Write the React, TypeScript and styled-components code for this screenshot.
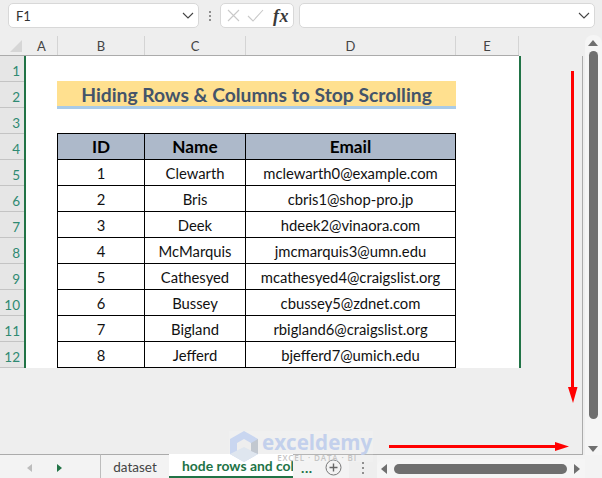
import React from "react";
import styled, { createGlobalStyle } from "styled-components";

const Global = createGlobalStyle`
  html, body { margin: 0; padding: 0; background: #eeeeee; }
  * { box-sizing: border-box; }
`;
const Page = styled.div`
  position: relative; width: 602px; height: 478px; overflow: hidden;
  background: #eeeeee; display: flex; flex-direction: column;
  font-family: Lato, "Liberation Sans", sans-serif; color: #222;
`;
const FormulaBar = styled.div`
  height: 36px; padding: 3px 7px 8px 8px; display: flex; align-items: stretch; flex: none;
`;
const Field = styled.div<{ $w?: number; $grow?: boolean }>`
  ${p => (p.$w ? `width:${p.$w}px;` : "")} ${p => (p.$grow ? "flex:1;" : "")}
  background: #fff; border: 1px solid #d8d8d8; border-radius: 5px;
  display: flex; align-items: center; padding: 0 4px 0 7px; font-size: 13px; color: #333;
`;
const FieldLabel = styled.span` flex: 1; font-family: Lato, sans-serif; font-size: 13px; `;
const Grip = styled.div`
  width: 21px; display: flex; flex-direction: column; align-items: center; justify-content: center; gap: 2px;
`;
const Dot = styled.i<{ $c?: string }>` display: block; width: 2px; height: 2px; background: ${p => p.$c || "#8f8f8f"}; `;
const FxBox = styled(Field)` margin-right: 5px; padding: 0 4px 0 6px; gap: 7px; `;
const Fx = styled.span`
  font-family: "Liberation Serif", serif; font-style: italic; font-weight: 700; font-size: 18px; line-height: 1; color: #3a3a3a; margin-left: 2px; letter-spacing: 0.5px;
`;
const Middle = styled.div` flex: 1; min-height: 0; display: flex; `;
const SheetPane = styled.div`
  width: 583px; flex: none; position: relative; display: flex; flex-direction: column;
`;
const ColHeaders = styled.div`
  height: 20px; flex: none; display: grid; width: 519px;
  grid-template-columns: 26px 32px 87px 101px 210px 63px;
  border-bottom: 1px solid #ababab;
`;
const Corner = styled.div` display: flex; align-items: flex-end; justify-content: flex-end; padding: 0 4px 3px 0; `;
const ColHead = styled.div`
  display: flex; align-items: center; justify-content: center; font-size: 13px; color: #444;
  border-right: 1px solid #d4d4d4;
`;
const SheetWell = styled.div`
  flex: 1; min-height: 0; border-right: 1px solid #ababab; border-bottom: 1px solid #ababab;
`;
const SheetBody = styled.div` display: flex; height: 312px; width: 521px; `;
const RowHeaders = styled.div` width: 24px; flex: none; display: flex; flex-direction: column; background: #e6e6e6; `;
const RowHead = styled.div`
  height: 26px; flex: none; display: flex; align-items: center; justify-content: flex-end; padding: 5px 4px 0 0;
  font-size: 13.5px; color: #2f8a72; border-bottom: 1px solid #c4c4c4;
`;
const Canvas = styled.div`
  flex: 1; background: #fff; border-left: 2px solid #217346; border-right: 2px solid #217346;
  padding: 25px 0 0 31px; display: flex; flex-direction: column;
`;
const Title = styled.div`
  width: 399px; height: 28px; background: #ffe08f; border-bottom: 3px solid #a9cbe8;
  font-weight: 700; font-size: 19.3px; color: #44546a; text-align: center; line-height: 27px; flex: none;
`;
const Table = styled.table`
  margin-top: 24px; border-collapse: collapse; table-layout: fixed; width: 398px; flex: none;
`;
const Th = styled.th<{ $w: number }>`
  width: ${p => p.$w}px; height: 26px; padding: 0; border: 1px solid #000; background: #adb9ca;
  font-size: 17.2px; font-weight: 700; color: #000; text-align: center;
`;
const Td = styled.td`
  height: 26px; padding: 0; border: 1px solid #000; font-size: 14.8px; color: #111; text-align: center; background: #fff;
`;
const VScroll = styled.div`
  flex: 1; display: flex; flex-direction: column; align-items: center;
`;
const VTrack = styled.div`
  margin-top: -1px; width: 17px; height: 420px; background: #f5f5f5; border-radius: 8px 8px 0 0; flex: none;
  display: flex; flex-direction: column; align-items: center; padding: 5px 0 3px; margin-left: 1px;
`;
const VThumb = styled.div` width: 9px; height: 368px; margin-top: 5px; background: #6f6f6f; border-radius: 5px; flex: none; `;
const VSpacer = styled.div` flex: 1; `;
const Tri = styled.i<{ $d: "u" | "d" | "l" | "r"; $c?: string; $s?: number }>`
  display: block; width: 0; height: 0; flex: none;
  ${p => {
    const c = p.$c || "#6f6f6f"; const s = p.$s || 4;
    if (p.$d === "u") return `border-left:${s + 1}px solid transparent;border-right:${s + 1}px solid transparent;border-bottom:${s + 2}px solid ${c};`;
    if (p.$d === "d") return `border-left:${s + 1}px solid transparent;border-right:${s + 1}px solid transparent;border-top:${s + 2}px solid ${c};`;
    if (p.$d === "l") return `border-top:${s + 1}px solid transparent;border-bottom:${s + 1}px solid transparent;border-right:${s + 2}px solid ${c};`;
    return `border-top:${s + 1}px solid transparent;border-bottom:${s + 1}px solid transparent;border-left:${s + 2}px solid ${c};`;
  }}
`;
const TabBar = styled.div` height: 24px; flex: none; display: flex; align-items: stretch; margin-top: -1px; position: relative; `;
const TabNav = styled.div`
  width: 101px; flex: none; background: #f3f3f3; border-top: 1px solid #ababab; border-right: 1px solid #bdbdbd;
  display: flex; align-items: center; padding: 2px 0 0 27px; gap: 25px;
`;
const Tab = styled.div`
  width: 68px; flex: none; background: #f3f3f3; border-top: 1px solid #ababab; display: flex; align-items: center; justify-content: center;
  font-size: 13.5px; color: #444; padding: 1px 0 0 0;
`;
const ActiveTab = styled.div`
  width: 124px; flex: none; background: #fff; border-bottom: 2px solid #217346; display: flex; align-items: center; white-space: nowrap; overflow: hidden;
  font-size: 13.9px; font-weight: 700; color: #217346; padding: 1px 0 0 13px;
`;
const TabRest = styled.div`
  flex: 1; display: flex; align-items: center; min-width: 0; background: #f3f3f3; margin-top: 1px;
`;
const More = styled.span` font-size: 14px; font-weight: 700; color: #217346; width: 32px; padding: 3px 0 0 8px; line-height: 1; letter-spacing: 0.6px; `;
const PlusWrap = styled.div` width: 24px; display: flex; align-items: center; padding-top: 2px; `;
const Grip2 = styled(Grip)` width: 28px; gap: 3px; padding-top: 2px; background: #eeeeee; align-self: stretch; `;
const HScroll = styled.div`
  width: 208px; flex: none; height: 19px; align-self: flex-end; background: #f5f5f5; border-radius: 8px 0 0 0;
  display: flex; align-items: center; padding: 0 0 0 4px; gap: 7px;
`;
const HThumb = styled.div` width: 173px; height: 10px; background: #6f6f6f; border-radius: 5px; flex: none; `;
const Arrow = styled.svg` position: absolute; left: 0; top: 0; pointer-events: none; `;
const Watermark = styled.div`
  position: absolute; left: 229px; top: 431px; width: 144px; height: 31px; display: flex; gap: 3px; pointer-events: none;
  background: rgba(255, 255, 255, 0.12);
`;
const WmLogo = styled.svg` flex: none; `;
const WmText = styled.div` display: flex; flex-direction: column; align-items: center; flex: none; `;
const WmMain = styled.span`
  font-family: "Open Sans", sans-serif; font-weight: 700; font-size: 20.6px; line-height: 22px; color: #c3d0ec;
`;
const WmSub = styled.span`
  font-family: "Open Sans", sans-serif; font-weight: 600; font-size: 8px; line-height: 9px; color: #c4c4c4; letter-spacing: 0.9px; white-space: nowrap;
`;

const Chevron = () => (
  <svg width="12" height="7" viewBox="0 0 12 7"><polyline points="1,1 6,6 11,1" fill="none" stroke="#444" strokeWidth="1.1" /></svg>
);
const rows = [
  ["1", "Clewarth", "mclewarth0@example.com"],
  ["2", "Bris", "cbris1@shop-pro.jp"],
  ["3", "Deek", "hdeek2@vinaora.com"],
  ["4", "McMarquis", "jmcmarquis3@umn.edu"],
  ["5", "Cathesyed", "mcathesyed4@craigslist.org"],
  ["6", "Bussey", "cbussey5@zdnet.com"],
  ["7", "Bigland", "rbigland6@craigslist.org"],
  ["8", "Jefferd", "bjefferd7@umich.edu"],
];

export default function App() {
  return (
    <Page>
      <Global />
      <FormulaBar>
        <Field $w={191}><FieldLabel>F1</FieldLabel><Chevron /></Field>
        <Grip><Dot /><Dot /><Dot /></Grip>
        <FxBox $w={74}>
          <svg width="13" height="13" viewBox="0 0 13 13"><path d="M1 1 L12 12 M12 1 L1 12" stroke="#c9c9c9" strokeWidth="1.1" fill="none" /></svg>
          <svg width="17" height="13" viewBox="0 0 17 13"><path d="M1 7 L6 12 L16 1" stroke="#c9c9c9" strokeWidth="1.1" fill="none" /></svg>
          <Fx>fx</Fx>
        </FxBox>
        <Field $grow><FieldLabel /><Chevron /></Field>
      </FormulaBar>
      <Middle>
        <SheetPane>
          <ColHeaders>
            <Corner>
              <svg width="12" height="12" viewBox="0 0 12 12"><polygon points="12,0 12,12 0,12" fill="#d6d6d6" /></svg>
            </Corner>
            <ColHead>A</ColHead>
            <ColHead>B</ColHead>
            <ColHead>C</ColHead>
            <ColHead>D</ColHead>
            <ColHead>E</ColHead>
          </ColHeaders>
          <SheetWell>
            <SheetBody>
              <RowHeaders>
                {Array.from({ length: 12 }, (_, i) => <RowHead key={i}>{i + 1}</RowHead>)}
              </RowHeaders>
              <Canvas>
                <Title>Hiding Rows &amp; Columns to Stop Scrolling</Title>
                <Table>
                  <thead>
                    <tr><Th $w={87}>ID</Th><Th $w={101}>Name</Th><Th $w={210}>Email</Th></tr>
                  </thead>
                  <tbody>
                    {rows.map(r => (
                      <tr key={r[0]}><Td>{r[0]}</Td><Td>{r[1]}</Td><Td>{r[2]}</Td></tr>
                    ))}
                  </tbody>
                </Table>
              </Canvas>
            </SheetBody>
          </SheetWell>
        </SheetPane>
        <VScroll>
          <VTrack>
            <Tri $d="u" />
            <VThumb />
            <VSpacer />
            <Tri $d="d" />
          </VTrack>
        </VScroll>
      </Middle>
      <TabBar>
        <TabNav><Tri $d="l" $c="#bdbdbd" $s={3} /><Tri $d="r" $c="#217346" $s={3} /></TabNav>
        <Tab>dataset</Tab>
        <ActiveTab>hode rows and col</ActiveTab>
        <TabRest>
          <More>...</More>
          <PlusWrap>
            <svg width="17" height="17" viewBox="0 0 17 17">
              <circle cx="8.5" cy="8.5" r="7.5" fill="none" stroke="#777" strokeWidth="1" />
              <path d="M8.5 4.5 V12.5 M4.5 8.5 H12.5" stroke="#666" strokeWidth="1.4" />
            </svg>
          </PlusWrap>
          <Grip2><Dot /><Dot /><Dot /></Grip2>
          <HScroll>
            <Tri $d="l" />
            <HThumb />
            <Tri $d="r" />
          </HScroll>
        </TabRest>
      </TabBar>
      <Watermark>
        <WmLogo width="30" height="31" viewBox="0 0 30 31">
          <polygon points="15,0 29,8 29,23 15,31 1,23 1,8" fill="#c9d6f0" />
          <polygon points="15,8 22,12 22,20 15,24 8,20 8,12" fill="#eeeeee" />
          <polygon points="15,16 29,23 15,31 1,23" fill="#dfe6ef" />
          <polygon points="22,12 29,8 29,23 22,20" fill="#c2c8d0" />
        </WmLogo>
        <WmText>
          <WmMain>exceldemy</WmMain>
          <WmSub>EXCEL · DATA · BI</WmSub>
        </WmText>
      </Watermark>
      <Arrow width="602" height="478" viewBox="0 0 602 478">
        <path d="M572.5 71 V388" stroke="#f00" strokeWidth="3" />
        <polygon points="568,387 577.5,387 573,403" fill="#f00" />
        <path d="M389 446.5 H556" stroke="#f00" strokeWidth="3" />
        <polygon points="555,442 569,446.5 555,451" fill="#f00" />
      </Arrow>
    </Page>
  );
}
